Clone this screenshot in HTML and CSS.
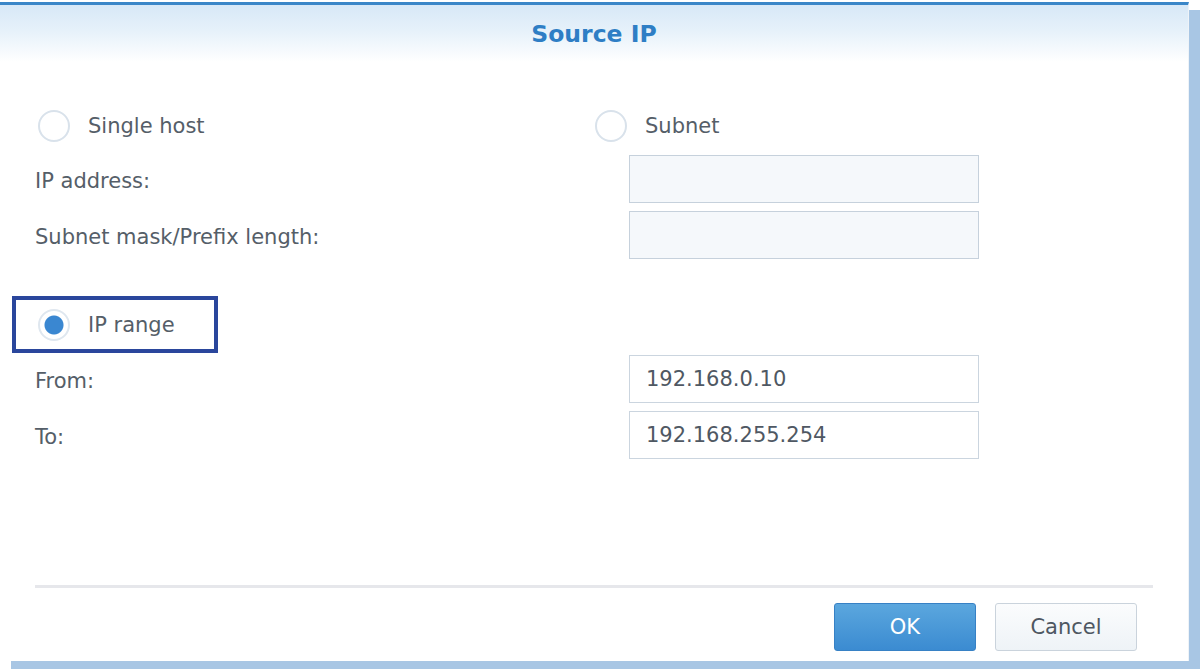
FILE: index.html
```html
<!DOCTYPE html>
<html lang="en">
<head>
<meta charset="utf-8">
<title>Source IP</title>
<link rel="stylesheet" href="styles.css">
</head>
<body>
<div class="dialog">
  <div class="header"><span class="title">Source IP</span></div>
  <div class="form">
    <div class="radio-row first">
      <label class="option wide"><span class="radio"></span><span class="opt-text">Single host</span></label>
      <label class="option"><span class="radio"></span><span class="opt-text">Subnet</span></label>
    </div>
    <div class="field f1">
      <span class="label">IP address:</span>
      <div class="input disabled"></div>
    </div>
    <div class="field f2">
      <span class="label">Subnet mask/Prefix length:</span>
      <div class="input disabled"></div>
    </div>
    <div class="radio-row range">
      <span class="highlight"></span>
      <label class="option"><span class="radio checked"></span><span class="opt-text">IP range</span></label>
    </div>
    <div class="field f3">
      <span class="label">From:</span>
      <div class="input">192.168.0.10</div>
    </div>
    <div class="field f2">
      <span class="label">To:</span>
      <div class="input">192.168.255.254</div>
    </div>
  </div>
  <div class="footer">
    <div class="separator"></div>
    <div class="buttons">
      <button class="btn primary">OK</button>
      <button class="btn secondary">Cancel</button>
    </div>
  </div>
</div>
</body>
</html>
```

FILE: styles.css
```css
html, body {
  margin: 0;
  padding: 0;
  background: #ffffff;
}

body {
  font-family: "DejaVu Sans", Verdana, sans-serif;
  font-size: 21px;
  color: #555e68;
  width: 1200px;
  height: 672px;
  overflow: hidden;
}

.dialog {
  margin-top: 2px;
  width: 1189px;
  height: 659px;
  box-sizing: border-box;
  border-top: 3px solid #3a86c8;
  border-right: 1px solid #eef3f8;
  background: #ffffff;
  box-shadow: 11px 8px 0 0 #a8c6e4;
  display: flex;
  flex-direction: column;
}

.header {
  height: 57px;
  flex: none;
  display: flex;
  align-items: center;
  justify-content: center;
  background: linear-gradient(to bottom, #d7e8f7 0%, #e6f1fa 45%, #ffffff 100%);
}

.title {
  font-family: "DejaVu Sans", Verdana, sans-serif;
  font-weight: bold;
  font-size: 23.5px;
  color: #2e7ec5;
}

.form {
  padding: 47px 0 0 35px;
  width: 944px;
  display: flex;
  flex-direction: column;
}

.radio-row {
  height: 34px;
  display: flex;
  align-items: center;
  padding-left: 3px;
  position: relative;
}

.radio-row.range {
  margin-top: 49px;
}

.option {
  display: flex;
  align-items: center;
  gap: 18px;
}

.option.wide {
  width: 557px;
}

.radio {
  width: 32px;
  height: 32px;
  box-sizing: border-box;
  border-radius: 50%;
  border: 2px solid #d9e2eb;
  background: #ffffff;
  flex: none;
}

.radio.checked {
  border-color: #dfe7ef;
  background: radial-gradient(circle, #3a87d1 0, #3a87d1 9px, #ffffff 10px);
}

.highlight {
  position: absolute;
  left: -23px;
  top: -12px;
  width: 206px;
  height: 57px;
  box-sizing: border-box;
  border: 4px solid #2a469c;
  pointer-events: none;
}

.field {
  height: 48px;
  display: flex;
  align-items: center;
  justify-content: space-between;
}

.field .label {
  padding-top: 3px;
}

.field.f1 { margin-top: 12px; }
.field.f2 { margin-top: 8px; }
.field.f3 { margin-top: 13px; }

.input {
  width: 350px;
  height: 48px;
  box-sizing: border-box;
  border: 1px solid #cbd5df;
  background: #ffffff;
  padding-left: 16px;
  display: flex;
  align-items: center;
  color: #4f5863;
}

.input.disabled {
  background: #f5f8fb;
  border-color: #c6d1dc;
}

.footer {
  margin-top: auto;
  padding: 0 35px 10px 35px;
}

.separator {
  height: 3px;
  background: #e6e7eb;
}

.buttons {
  margin-top: 15px;
  padding-right: 16px;
  display: flex;
  justify-content: flex-end;
  gap: 19px;
}

.btn {
  width: 142px;
  height: 48px;
  border-radius: 3px;
  font-family: "DejaVu Sans", Verdana, sans-serif;
  font-size: 21px;
  padding: 0;
  cursor: pointer;
}

.btn.primary {
  background: linear-gradient(to bottom, #5ba7de, #3b8bd1);
  border: 1px solid #3781c5;
  color: #ffffff;
}

.btn.secondary {
  background: linear-gradient(to bottom, #fbfcfd, #eef3f7);
  border: 1px solid #cad3dc;
  color: #4e5762;
}
```
